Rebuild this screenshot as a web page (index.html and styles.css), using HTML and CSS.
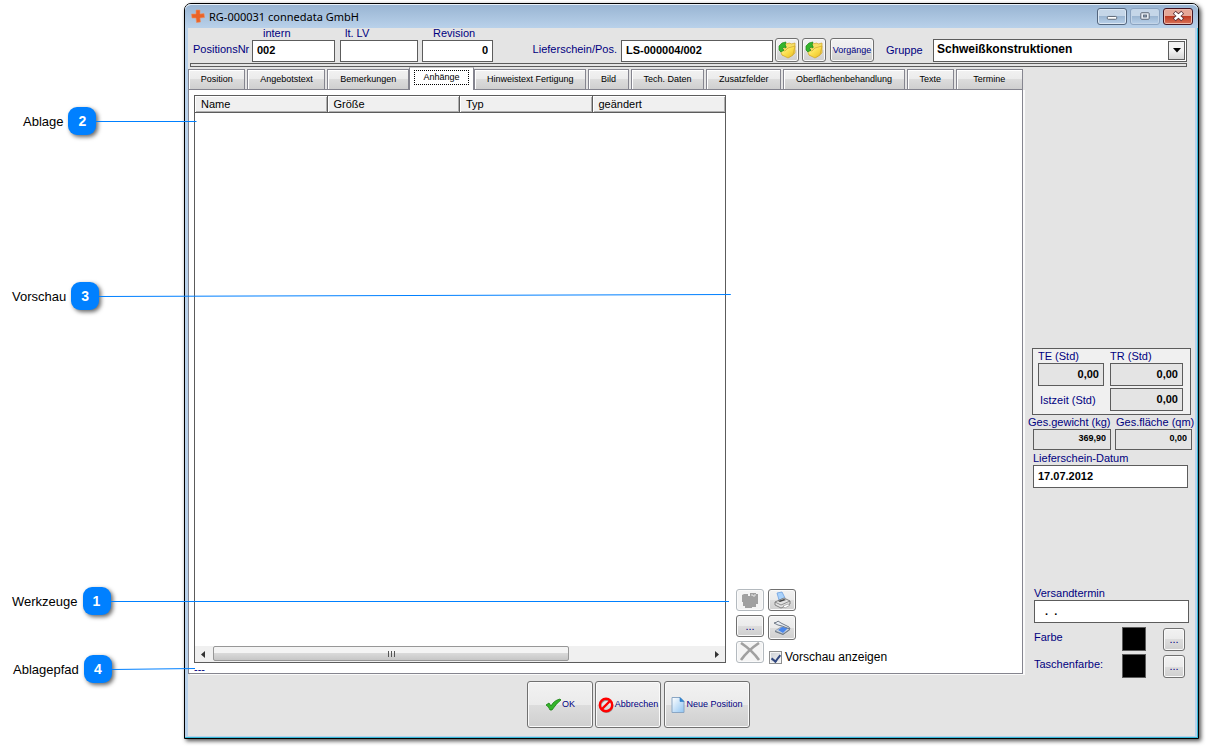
FILE: index.html
```html
<!DOCTYPE html>
<html lang="de">
<head>
<meta charset="utf-8">
<title>RG-000031 connedata GmbH</title>
<link rel="stylesheet" href="styles.css">
</head>
<body>
<svg class="defs" width="0" height="0" aria-hidden="true">
  <defs>
    <linearGradient id="gold" x1="0" y1="0" x2="1" y2="1"><stop offset="0" stop-color="#fffbc0"/><stop offset=".5" stop-color="#fbe04e"/><stop offset="1" stop-color="#e8b91c"/></linearGradient>
    <linearGradient id="sheet" x1="0" y1="0" x2="1" y2="1"><stop offset="0" stop-color="#ffffff"/><stop offset="1" stop-color="#8fc4f2"/></linearGradient>
    <symbol id="folder" viewBox="0 0 18 18">
      <path d="M7 3l5-1 1 1 4-1v10l-5 4-8-2z" fill="#f6df66" stroke="#d0a52a" stroke-width=".7"/>
      <path d="M2 9l5 1 3-3 7-2-2 9-5 3-6-3z" fill="url(#gold)" stroke="#d0a52a" stroke-width=".7"/>
      <path d="M8 1L4 2 1 5l0 4 2 2 3-2-2-1 2-2 2 1V5l-1-1z" fill="#35b52c" stroke="#1c8a17" stroke-width=".7"/>
    </symbol>
  </defs>
</svg>

<main class="window">
  <header class="titlebar">
    <svg class="logo" width="14" height="14" viewBox="0 0 14 14" aria-hidden="true"><path d="M5 1l4 0 0 4 4-.5 .5 4L9 9l.5 4-4 .5L5 9 1 9 .5 5 5 5z" fill="#ea6327" stroke="#f0905e" stroke-width=".6"/></svg>
    <h1>RG-000031 connedata GmbH</h1>
    <div class="caption-buttons">
      <button class="cap" aria-label="Minimieren"><svg width="30" height="16" viewBox="0 0 30 16"><rect x="10" y="8.500" width="10" height="3" rx="1" fill="#fff" stroke="#56606e"/></svg></button>
      <button class="cap dim" aria-label="Maximieren"><svg width="30" height="16" viewBox="0 0 30 16"><rect x="10.500" y="4.500" width="9" height="7" rx="1" fill="#e8eef5" stroke="#56606e"/><rect x="13.500" y="7" width="3" height="2" fill="#9db8d5" stroke="#56606e"/></svg></button>
      <button class="cap close" aria-label="Schließen"><svg width="30" height="16" viewBox="0 0 30 16"><path d="M11 4l9 8M20 4l-9 8" stroke="#5a3238" stroke-width="4.500"/><path d="M11.500 4.500l8 7M19.500 4.500l-8 7" stroke="#fff" stroke-width="2.600"/></svg></button>
    </div>
  </header>

  <section class="toolbar">
    <label class="side-label first" for="intern">PositionsNr</label>
    <div class="stack w-intern"><label for="intern">intern</label><input id="intern" type="text" value="002"></div>
    <div class="stack w-lv"><label for="lv">lt. LV</label><input id="lv" type="text" value=""></div>
    <div class="stack w-rev"><label for="rev">Revision</label><input id="rev" class="num" type="text" value="0"></div>
    <label class="side-label delivery" for="ls">Lieferschein/Pos.</label>
    <input id="ls" class="w-ls" type="text" value="LS-000004/002">
    <button class="btn icon" aria-label="Lieferschein öffnen"><svg width="18" height="18"><use href="#folder"/></svg></button>
    <button class="btn icon" aria-label="Position öffnen"><svg width="18" height="18"><use href="#folder"/></svg></button>
    <button class="btn events">Vorgänge</button>
    <label class="side-label group-label" for="gruppe">Gruppe</label>
    <div class="combo">
      <select id="gruppe"><option>Schweißkonstruktionen</option></select>
      <span class="arrow" aria-hidden="true"><svg width="8" height="5" viewBox="0 0 8 5"><path d="M0 0h8L4 4.500z"/></svg></span>
    </div>
  </section>
  <div class="rule"></div>

  <div class="content">
    <section class="tabs">
      <div class="tablist" role="tablist">
        <button class="tab" role="tab">Position</button>
        <button class="tab" role="tab">Angebotstext</button>
        <button class="tab" role="tab">Bemerkungen</button>
        <button class="tab active" role="tab" aria-selected="true"><span>Anhänge</span></button>
        <button class="tab" role="tab">Hinweistext Fertigung</button>
        <button class="tab" role="tab">Bild</button>
        <button class="tab" role="tab">Tech. Daten</button>
        <button class="tab" role="tab">Zusatzfelder</button>
        <button class="tab" role="tab">Oberflächenbehandlung</button>
        <button class="tab" role="tab">Texte</button>
        <button class="tab last" role="tab">Termine</button>
      </div>
      <div class="panel" role="tabpanel">
        <div class="files">
          <div class="listbox">
            <table>
              <thead><tr><th>Name</th><th>Größe</th><th>Typ</th><th>geändert</th></tr></thead>
            </table>
            <div class="scrollbar" aria-hidden="true">
              <svg width="17" height="15" viewBox="0 0 17 15"><path d="M10 4v7L6 7.500z" fill="#333"/></svg>
              <div class="track"><div class="thumb"><i></i><i></i><i></i></div></div>
              <svg width="17" height="15" viewBox="0 0 17 15"><path d="M7 4v7l4-3.500z" fill="#333"/></svg>
            </div>
          </div>
          <p class="path">---</p>
        </div>
        <div class="tools">
          <div class="tool-col">
            <button class="btn tool off" disabled aria-label="Einfügen"><svg width="18" height="18" viewBox="0 0 18 18"><path d="M1 4l2-1h4v2h2V2h6v1h2v10h-2v3h-4v1H4v-2H2v-4H1z" fill="#a0a0a0"/><path d="M10 4h2v1h2V3" fill="none" stroke="#e4e4e4"/></svg></button>
            <button class="btn tool">...</button>
            <button class="btn tool off" disabled aria-label="Löschen"><svg width="22" height="20" viewBox="0 0 22 20"><path d="M2 1c6 4 13 10 18 17M20 1C14 5 7 11 2 18" fill="none" stroke="#a0a0a0" stroke-width="2.600"/></svg></button>
          </div>
          <div class="tool-col">
            <button class="btn tool" aria-label="Drucken"><svg width="18" height="18" viewBox="0 0 18 18"><path d="M4 2l5-1 3 6-6 2z" fill="#a9d2fb" stroke="#6f9fe0" stroke-width=".8"/><path d="M2 11l9-4 6 3v3l-9 4-6-3z" fill="#e2e2e2" stroke="#777" stroke-width=".9"/><path d="M2 11l6 3 9-4" fill="none" stroke="#777" stroke-width=".8"/><path d="M5 10l6-2 2 1-6 2z" fill="#444"/><path d="M10 15l5-2 2 1-5 3z" fill="#fff" stroke="#777" stroke-width=".5"/></svg></button>
            <button class="btn tool tall" aria-label="Scannen"><svg width="18" height="18" viewBox="0 0 18 18"><path d="M2 12l6-4 9 2-7 5z" fill="#c9d3de" stroke="#8793a1" stroke-width=".8"/><path d="M5 11l4-3 6 1-5 5z" fill="#4a86ea"/><path d="M1 4l3-1 1-1 3 2 8 4 1 2-8-3-4-1z" fill="#e8edf3" stroke="#66717e" stroke-width=".9"/><path d="M10 15l7-5v1l-7 5-8-3v-1z" fill="#6b7580"/></svg></button>
            <label class="check"><input type="checkbox" checked>Vorschau anzeigen</label>
          </div>
        </div>
      </div>
    </section>

    <aside class="sidebar">
      <div class="times">
        <div class="cell te"><label for="te">TE (Std)</label><input id="te" class="num gray" type="text" value="0,00"></div>
        <div class="cell"><label for="tr">TR (Std)</label><input id="tr" class="num gray" type="text" value="0,00"></div>
        <label class="ist" for="ist">Istzeit (Std)</label>
        <input id="ist" class="num gray" type="text" value="0,00">
      </div>
      <div class="totals">
        <div class="cell"><label for="kg">Ges.gewicht (kg)</label><input id="kg" class="num gray small" type="text" value="369,90"></div>
        <div class="cell"><label for="qm">Ges.fläche (qm)</label><input id="qm" class="num gray small" type="text" value="0,00"></div>
      </div>
      <div class="cell date"><label for="lsd">Lieferschein-Datum</label><input id="lsd" type="text" value="17.07.2012"></div>
      <div class="cell date ship"><label for="vt">Versandtermin</label><input id="vt" type="text" value="  .  ."></div>
      <div class="color-row"><span>Farbe</span><span class="swatch"></span><button class="btn pick" aria-label="Farbe wählen">...</button></div>
      <div class="color-row"><span>Taschenfarbe:</span><span class="swatch"></span><button class="btn pick" aria-label="Taschenfarbe wählen">...</button></div>
    </aside>
  </div>

  <footer class="actions">
    <button class="btn action"><svg width="16" height="16" viewBox="0 0 16 16"><path d="M1 8l3-2 2 3c2-4 5-6 9-7l1 1c-4 3-6 6-9 10H5C4 11 3 9 1 8z" fill="#35b52c" stroke="#16800f" stroke-width=".8"/></svg>OK</button>
    <button class="btn action"><svg width="16" height="16" viewBox="0 0 16 16"><circle cx="8.500" cy="9" r="6" fill="none" stroke="#999" stroke-width="2"/><circle cx="8" cy="8" r="6.200" fill="none" stroke="#f00" stroke-width="2.400"/><path d="M4 12l8-8" stroke="#f00" stroke-width="2.400"/></svg>Abbrechen</button>
    <button class="btn action wide"><svg width="14" height="16" viewBox="0 0 14 16"><path d="M1 .5h8l4 4v11H1z" fill="url(#sheet)" stroke="#8aa6c4"/><path d="M9 .5v4h4z" fill="#2f86d8" stroke="#2f78bd" stroke-width=".6"/></svg>Neue Position</button>
  </footer>
</main>

<div class="callout c2"><span>Ablage</span><b>2</b><svg height="6"><line x1="0" y1="3.500" x2="100%" y2="3.500"/></svg></div>
<div class="callout c3"><span>Vorschau</span><b>3</b><svg height="6"><line x1="0" y1="3.500" x2="100%" y2="1.500"/></svg></div>
<div class="callout c1"><span>Werkzeuge</span><b>1</b><svg height="6"><line x1="0" y1="3.500" x2="100%" y2="3.500"/></svg></div>
<div class="callout c4"><span>Ablagepfad</span><b>4</b><svg height="6"><line x1="0" y1="3.500" x2="100%" y2="2.500"/></svg></div>
</body>
</html>
```
FILE: styles.css
```css
* { box-sizing: border-box; }
body {
  margin: 0;
  min-height: 100vh;
  padding: 3px 8px 8px 184px;
  display: flex;
  position: relative;
  background: #fff;
  color: #000080;
  font: 11px/13px "Liberation Sans", Arial, sans-serif;
}
.defs { position: absolute; }
button, input, select { font: inherit; color: inherit; margin: 0; }
h1, p { margin: 0; }

.window {
  flex: 1;
  display: flex;
  flex-direction: column;
  padding: 0 3px 2px;
  border: 1px solid #000;
  border-radius: 7px 7px 0 0;
  background: #e4e4e4;
  box-shadow: inset -1px -1px #34b9d8, inset 3px 0 #b9d1ea, inset -3px -2px #b9d1ea, 2px 2px 4px rgba(0, 0, 0, .7);
}

/* title bar */
.titlebar {
  height: 24px;
  flex: none;
  margin: 0 -3px;
  padding: 0 5px 0 6px;
  display: flex;
  align-items: center;
  gap: 4px;
  border-radius: 6px 6px 0 0;
  background: linear-gradient(#98b4d2, #b9d1ea);
  box-shadow: inset 0 1px #e9f1fa;
  color: #000;
}
.titlebar h1 { flex: 1; font: 11px/16px "Noto Sans", sans-serif; padding-top: 2px; }
.caption-buttons { display: flex; gap: 3px; }
.cap {
  width: 30px;
  height: 17px;
  padding: 0;
  display: flex;
  align-items: center;
  justify-content: center;
  border: 1px solid #53657d;
  border-radius: 3px;
  background: linear-gradient(#c5d6e8 45%, #9cb6d2 50%, #b9d1ea);
  box-shadow: inset 0 0 0 1px #dce8f4;
}
.cap.dim { border-color: #8ba3c0; box-shadow: inset 0 0 0 1px #c3d5e8; }
.cap.close {
  border-color: #431422;
  background: linear-gradient(#e5a797 45%, #bf3a22 50%, #d8735a);
  box-shadow: inset 0 0 0 1px #ecb9ac;
}

/* fields */
input[type="text"] {
  height: 22px;
  width: 100%;
  padding: 0 4px 2px;
  border: 1px solid #5c5c5c;
  border-radius: 0;
  background: #fff;
  color: #000;
  font-weight: bold;
}
input.num { text-align: right; }
.sidebar input.gray { background: #e4e4e4; }

.btn {
  padding: 0;
  display: flex;
  align-items: center;
  justify-content: center;
  border: 1px solid #707070;
  border-radius: 3px;
  background: linear-gradient(#f2f2f2, #ebebeb 50%, #dddddd 50%, #cfcfcf);
  box-shadow: inset 0 0 0 1px #fafafa;
}

.toolbar {
  flex: none;
  height: 34px;
  padding: 0 8px 0 5px;
  display: flex;
  align-items: flex-end;
}
.stack { display: flex; flex-direction: column; }
.stack label { height: 12px; line-height: 11px; padding-left: 11px; }
.side-label { padding-bottom: 6px; white-space: nowrap; }
.first { width: 59px; }
.w-intern { width: 83px; margin-right: 5px; }
.w-lv { width: 78px; margin-right: 4px; }
.w-lv label { padding-left: 5px; }
.w-rev { width: 71px; }
.delivery { width: 128px; padding-right: 4px; text-align: right; }
.toolbar .w-ls { width: 152px; margin-right: 2px; }
.icon { width: 24px; height: 24px; margin-right: 3px; }
.events { width: 44px; height: 24px; margin-left: 1px; font-size: 9px; }
.group-label { width: 59px; padding: 0 0 5px 12px; }
.combo { flex: 1; height: 23px; position: relative; }
.combo select {
  width: 100%;
  height: 100%;
  padding: 0 24px 2px 3px;
  appearance: none;
  border: 1px solid #5c5c5c;
  border-radius: 0;
  background: #fff;
  color: #000;
  font-size: 12px;
  font-weight: bold;
}
.arrow {
  position: absolute;
  top: 2px;
  right: 2px;
  bottom: 2px;
  width: 17px;
  display: flex;
  align-items: center;
  justify-content: center;
  border: 1px solid #5c5c5c;
  background: linear-gradient(#f2f2f2 50%, #d6d6d6);
  pointer-events: none;
}
.rule { flex: none; height: 4px; margin: 1px 8px 0 2px; border: 1px solid #5c5c5c; }

.content { flex: 1; display: flex; }

/* tabs */
.tabs { flex: 1; display: flex; flex-direction: column; }
.tablist { flex: none; height: 22px; display: flex; align-items: flex-end; gap: 2px; }
.tab {
  flex: 1 1 auto;
  height: 20px;
  padding: 0 10px;
  border: 1px solid #85858f;
  border-bottom: 0;
  border-radius: 0;
  background: linear-gradient(#f2f2f2, #ebebeb 50%, #dcdcdc 50%, #cfcfcf);
  box-shadow: inset 1px 1px #fff;
  color: #000;
  font-size: 9px;
  white-space: nowrap;
}
.tab.active {
  height: 23px;
  margin: 0 -2px -1px;
  padding: 0 4px 3px;
  z-index: 1;
  border-top-color: #c8c8c8;
  background: #fff;
}
.tab.active span { display: block; border: 1px dotted #000; padding: 0 7px; line-height: 13px; }
.tab.last { padding: 0 15px; }
.panel {
  flex: 1;
  display: flex;
  gap: 10px;
  padding: 5px 5px 0;
  border: 1px solid #85858f;
  background: #fff;
  box-shadow: 2px 1px #fafafa;
}
.files { flex: 0 1 532px; display: flex; flex-direction: column; }
.listbox { flex: 1; display: flex; flex-direction: column; justify-content: space-between; border: 1px solid #5c5c5c; }
table { width: 100%; table-layout: fixed; border-collapse: separate; border-spacing: 0; color: #000; }
th {
  height: 17px;
  padding: 1px 0 0 6px;
  border-right: 1px solid #5c5c5c;
  border-bottom: 1px solid #5c5c5c;
  background: #f0f0f0;
  box-shadow: inset 1px 1px #fff, inset -1px -1px #b0b0b0;
  font-weight: normal;
  text-align: left;
}
th:last-child { border-right: 0; }
.scrollbar { display: flex; height: 16px; align-items: center; background: #f0f0f0; }
.track { flex: 1; height: 100%; padding-left: 1px; }
.thumb {
  width: 72%;
  height: 15px;
  display: flex;
  align-items: center;
  justify-content: center;
  gap: 2px;
  border: 1px solid #979797;
  border-radius: 2px;
  background: linear-gradient(#f4f4f4 45%, #d9d9d9 50%, #c6c6c6);
}
.thumb i { width: 1px; height: 6px; background: #555; }
.path { height: 10px; line-height: 12px; }

.tools { display: flex; align-items: flex-end; gap: 4px; padding-bottom: 10px; }
.tool-col { display: flex; flex-direction: column; gap: 4px; height: 74px; }
.tool { width: 28px; height: 22px; flex: none; }
.tool.tall { height: 25px; }
.tool.off { border-color: #b4babf; background: #f4f4f4; }
.check { display: flex; align-items: center; gap: 3px; padding-top: 7px; font-size: 12px; color: #000; white-space: nowrap; }
.check input {
  appearance: none;
  width: 13px;
  height: 13px;
  margin: 0 0 0 1px;
  border: 1px solid #8e8f8f;
  box-shadow: inset 0 0 0 1px #f4f4f4;
  background: linear-gradient(135deg, #cbcfd5, #f6f6f6);
}
.check input:checked::after {
  content: "";
  display: block;
  width: 4px;
  height: 7px;
  margin: 1px 0 0 3px;
  border: solid #31477f;
  border-width: 0 2px 2px 0;
  transform: rotate(38deg);
}

/* right column */
.sidebar {
  width: 172px;
  flex: none;
  display: flex;
  flex-direction: column;
  justify-content: flex-end;
  padding: 0 4px 0 9px;
}
.sidebar label { display: block; white-space: nowrap; }
.sidebar input { height: 23px; display: block; }
.times {
  width: 159px;
  padding: 1px 7px 3px 5px;
  display: grid;
  grid-template-columns: 66px 73px;
  gap: 2px 6px;
  border: 1px solid #5c5c5c;
  background: #f0f0f0;
}
.times .cell { min-width: 0; }
.ist { padding: 6px 0 0 2px; }
.totals { display: grid; grid-template-columns: 78px 77px; gap: 4px; padding: 1px 0 0 1px; }
.totals label { margin-left: -5px; }
.totals .cell + .cell label { margin-left: 1px; }
.sidebar .small { height: 21px; font-size: 9px; padding-bottom: 4px; }
.date { width: 156px; padding: 2px 0 0 1px; }
.ship { margin: 97px 0 4px 1px; }
.color-row { display: flex; align-items: center; height: 24px; margin-bottom: 3px; padding-left: 2px; }
.color-row span:first-child { width: 88px; padding-bottom: 3px; }
.swatch { width: 24px; height: 24px; border: 1px solid #5c5c5c; background: #000; }
.pick { width: 22px; height: 23px; margin-left: 17px; }
.color-row:last-child { margin-bottom: -4px; }

.actions { flex: none; display: flex; gap: 2px; margin: 7px 0 8px 339px; }
.action { width: 66px; height: 47px; gap: 1px; font-size: 9px; white-space: nowrap; }
.action.wide { width: 86px; margin-left: 1px; }

/* numbered callouts over the window */
.callout {
  position: absolute;
  display: flex;
  align-items: center;
  gap: 5px;
  color: #000;
  font-size: 13px;
  line-height: 16px;
  pointer-events: none;
}
.callout span { padding-top: 2px; }
.callout b {
  width: 28px;
  height: 28px;
  border-radius: 9px;
  background: #0080ff;
  color: #fff;
  font-size: 14px;
  line-height: 28px;
  text-align: center;
  box-shadow: 2px 2px 4px rgba(0, 0, 0, .6);
}
.callout svg { flex: 1; min-width: 0; margin-left: -5px; }
.callout line { stroke: #0080ff; stroke-width: 1; }
.c2 { left: 23px; top: 107px; width: 174px; }
.c3 { left: 12px; top: 282px; width: 719px; }
.c1 { left: 12px; top: 587px; width: 717px; }
.c4 { left: 13px; top: 655px; width: 182px; }
```
